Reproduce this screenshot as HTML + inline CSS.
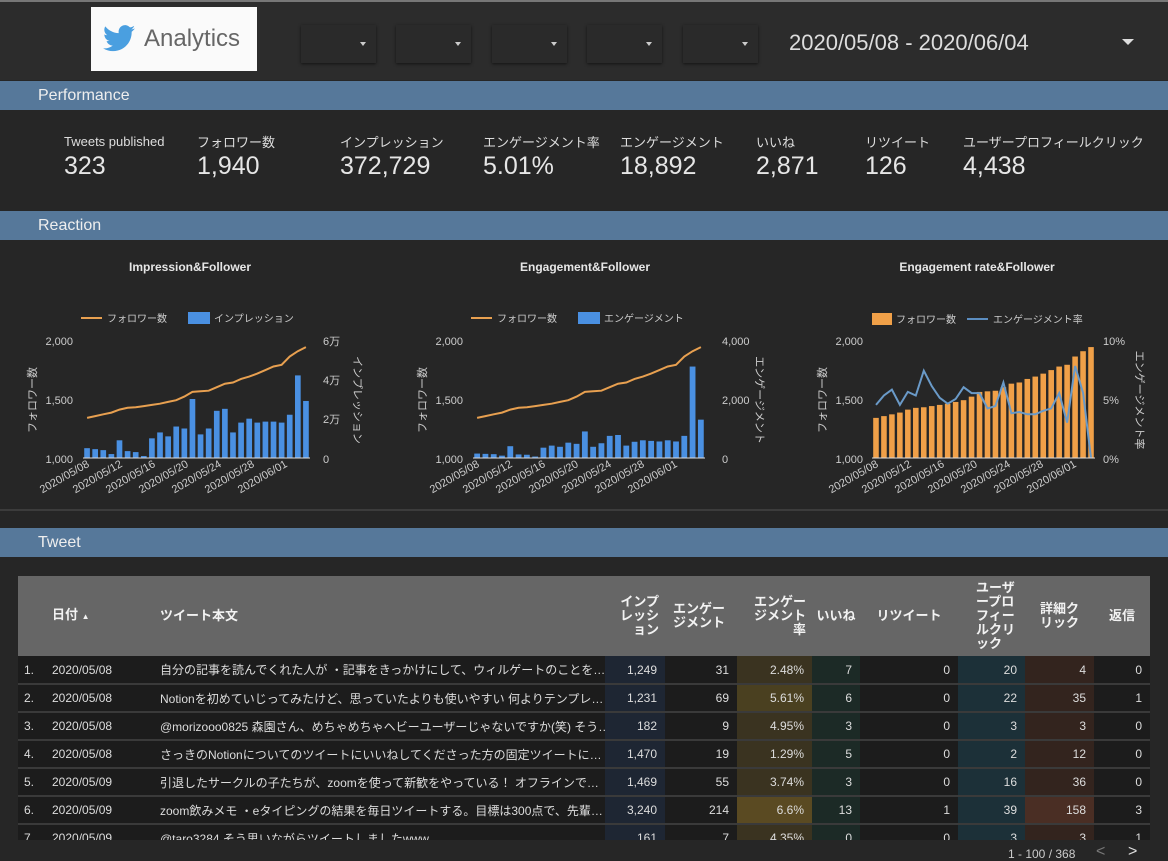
<!DOCTYPE html>
<html><head><meta charset="utf-8">
<style>
*{margin:0;padding:0;box-sizing:border-box}
body{width:1168px;height:861px;overflow:hidden;background:#262626;font-family:"Liberation Sans","Noto Sans CJK JP",sans-serif;color:#ddd;position:relative}
.abs{position:absolute}
.top{left:0;top:0;width:1168px;height:80px;background:#2c2c2c;border-top:2px solid #777}
.logo{left:91px;top:7px;width:166px;height:64px;background:#fafafa}
.dd{top:25px;width:75px;height:38px;background:#2a2a2a;box-shadow:0 1px 3px rgba(0,0,0,.6)}
.dd:after{content:"";position:absolute;right:10px;top:17px;border:3px solid transparent;border-top:4px solid #ccc}
.bar{left:0;width:1168px;height:29px;background:#56789a;color:#eee;font-size:16px;padding:6px 0 0 38px}
.lab{font-size:13px;color:#ddd;top:132px}
.val{font-size:25px;color:#e6e6e6;top:152px}
table{border-collapse:collapse;table-layout:fixed;font-size:12px;width:1132px}
th{background:#666;color:#f2f2f2;font-weight:bold;font-size:13px;height:80px;line-height:14px;vertical-align:middle;padding:0}
td{height:28px;border-bottom:2px solid #3a3a3a;color:#ddd;text-align:right;padding:0 8px 0 0;white-space:nowrap;overflow:hidden;text-overflow:clip}
td.l{text-align:left;padding-left:6px}
</style></head><body>
<div class="abs top"></div>
<div class="abs logo">
<svg class="abs" style="left:12px;top:18px" width="32" height="27" viewBox="0 0 24 20"><path fill="#4a9fe0" d="M24 2.4c-.9.4-1.8.6-2.8.8 1-.6 1.8-1.6 2.2-2.7-1 .6-2 1-3.1 1.2C19.3.7 18 0 16.6 0c-2.7 0-4.9 2.2-4.9 4.9 0 .4 0 .8.1 1.1C7.7 5.8 4.1 3.9 1.7.9c-.4.7-.7 1.6-.7 2.5 0 1.7.9 3.2 2.2 4.1-.8 0-1.6-.2-2.2-.6v.1c0 2.4 1.7 4.4 3.9 4.8-.4.1-.8.2-1.3.2-.3 0-.6 0-.9-.1.6 2 2.4 3.4 4.6 3.4-1.700 1.3-3.8 2.1-6.1 2.1-.4 0-.8 0-1.2-.1 2.2 1.4 4.8 2.2 7.5 2.2 9.1 0 14-7.5 14-14v-.6c1-.7 1.8-1.6 2.5-2.5z"/></svg>
<div class="abs" style="left:53px;top:18px;font-size:24px;color:#666">Analytics</div></div>
<div class="abs dd" style="left:301px"></div><div class="abs dd" style="left:396px"></div><div class="abs dd" style="left:492px"></div><div class="abs dd" style="left:587px"></div><div class="abs dd" style="left:683px"></div>
<div class="abs" style="left:789px;top:30px;font-size:22px;color:#ddd">2020/05/08 - 2020/06/04</div>
<div class="abs" style="left:1122px;top:39px;border:6px solid transparent;border-top:6px solid #ddd"></div>

<div class="abs bar" style="top:81px">Performance</div>
<div class="abs lab" style="left:64px;top:134px">Tweets published</div><div class="abs val" style="left:64px">323</div>
<div class="abs lab" style="left:197px">フォロワー数</div><div class="abs val" style="left:197px">1,940</div>
<div class="abs lab" style="left:340px">インプレッション</div><div class="abs val" style="left:340px">372,729</div>
<div class="abs lab" style="left:483px">エンゲージメント率</div><div class="abs val" style="left:483px">5.01%</div>
<div class="abs lab" style="left:620px">エンゲージメント</div><div class="abs val" style="left:620px">18,892</div>
<div class="abs lab" style="left:756px">いいね</div><div class="abs val" style="left:756px">2,871</div>
<div class="abs lab" style="left:865px">リツイート</div><div class="abs val" style="left:865px">126</div>
<div class="abs lab" style="left:963px">ユーザープロフィールクリック</div><div class="abs val" style="left:963px">4,438</div>

<div class="abs bar" style="top:211px">Reaction</div>
<svg class="abs" id="ch" style="left:0;top:240px" width="1168" height="270" font-family="Liberation Sans,Noto Sans CJK JP,sans-serif">
<g font-size="12" font-weight="bold" fill="#e6e6e6" text-anchor="middle">
<text x="190" y="31">Impression&amp;Follower</text><text x="585" y="31">Engagement&amp;Follower</text><text x="977" y="31">Engagement rate&amp;Follower</text></g>
<g font-size="10" fill="#ccc">
<line x1="81" y1="78" x2="102" y2="78" stroke="#e8a050" stroke-width="2"/><text x="107" y="82">フォロワー数</text>
<rect x="188" y="72" width="22" height="12" fill="#4a90e2"/><text x="214" y="82">インプレッション</text>
<line x1="471" y1="78" x2="492" y2="78" stroke="#e8a050" stroke-width="2"/><text x="497" y="82">フォロワー数</text>
<rect x="578" y="72" width="22" height="12" fill="#4a90e2"/><text x="604" y="82">エンゲージメント</text>
<rect x="872" y="73" width="20" height="12" fill="#f0a048"/><text x="896" y="83">フォロワー数</text>
<line x1="967" y1="79" x2="988" y2="79" stroke="#5b8dc0" stroke-width="2"/><text x="993" y="83">エンゲージメント率</text>
</g>
<g font-size="11" fill="#ccc" text-anchor="end">
<text x="73" y="105">2,000</text><text x="73" y="164">1,500</text><text x="73" y="223">1,000</text>
<text x="463" y="105">2,000</text><text x="463" y="164">1,500</text><text x="463" y="223">1,000</text>
<text x="863" y="105">2,000</text><text x="863" y="164">1,500</text><text x="863" y="223">1,000</text></g>
<g font-size="11" fill="#ccc">
<text x="323" y="105">6万</text><text x="323" y="144">4万</text><text x="323" y="183">2万</text><text x="323" y="223">0</text>
<text x="722" y="105">4,000</text><text x="722" y="164">2,000</text><text x="722" y="223">0</text>
<text x="1103" y="105">10%</text><text x="1103" y="164">5%</text><text x="1103" y="223">0%</text></g>
<g font-size="11" fill="#ccc" text-anchor="middle">
<text transform="translate(36,160) rotate(-90)">フォロワー数</text><text transform="translate(354,160) rotate(90)">インプレッション</text>
<text transform="translate(426,160) rotate(-90)">フォロワー数</text><text transform="translate(756,160) rotate(90)">エンゲージメント</text>
<text transform="translate(826,160) rotate(-90)">フォロワー数</text><text transform="translate(1136,160) rotate(90)">エンゲージメント率</text></g>
<g id="dl" font-size="11" fill="#ccc" text-anchor="end">
<text transform="translate(90,226) rotate(-30)">2020/05/08</text><text transform="translate(123,226) rotate(-30)">2020/05/12</text><text transform="translate(156,226) rotate(-30)">2020/05/16</text><text transform="translate(189,226) rotate(-30)">2020/05/20</text><text transform="translate(222,226) rotate(-30)">2020/05/24</text><text transform="translate(255,226) rotate(-30)">2020/05/28</text><text transform="translate(288,226) rotate(-30)">2020/06/01</text>
<text transform="translate(480,226) rotate(-30)">2020/05/08</text><text transform="translate(513,226) rotate(-30)">2020/05/12</text><text transform="translate(546,226) rotate(-30)">2020/05/16</text><text transform="translate(579,226) rotate(-30)">2020/05/20</text><text transform="translate(612,226) rotate(-30)">2020/05/24</text><text transform="translate(645,226) rotate(-30)">2020/05/28</text><text transform="translate(678,226) rotate(-30)">2020/06/01</text>
<text transform="translate(879,226) rotate(-30)">2020/05/08</text><text transform="translate(912,226) rotate(-30)">2020/05/12</text><text transform="translate(945,226) rotate(-30)">2020/05/16</text><text transform="translate(978,226) rotate(-30)">2020/05/20</text><text transform="translate(1011,226) rotate(-30)">2020/05/24</text><text transform="translate(1044,226) rotate(-30)">2020/05/28</text><text transform="translate(1077,226) rotate(-30)">2020/06/01</text></g>
</svg>
<div class="abs" style="left:0;top:509px;width:1168px;height:2px;background:#3c3c3c"></div>
<div class="abs bar" style="top:528px">Tweet</div>
<div class="abs" style="left:18px;top:576px;width:1132px;height:264px;overflow:hidden;background:#1c1c1c">
<table>
<colgroup><col style="width:28px"><col style="width:108px"><col style="width:451px"><col style="width:60px"><col style="width:72px"><col style="width:75px"><col style="width:48px"><col style="width:98px"><col style="width:67px"><col style="width:69px"><col style="width:56px"></colgroup>
<tr><th></th><th style="text-align:left;padding-left:6px">日付 <span style="font-size:8px">▲</span></th><th style="text-align:left;padding-left:6px">ツイート本文</th><th style="text-align:right;padding-right:6px">インプ<br>レッシ<br>ョン</th><th style="text-align:left;padding-left:8px">エンゲー<br>ジメント</th><th style="text-align:right;padding-right:6px">エンゲー<br>ジメント<br>率</th><th>いいね</th><th>リツイート</th><th style="text-align:left;padding-left:18px">ユーザ<br>ープロ<br>フィー<br>ルクリ<br>ック</th><th>詳細ク<br>リック</th><th>返信</th></tr>
<tbody id="tb"></tbody>
</table></div>
<div class="abs" style="left:1008px;top:847px;font-size:12px;color:#ccc">1 - 100 / 368</div>
<div class="abs" style="left:1096px;top:843px;font-size:16px;color:#777">&lt;</div>
<div class="abs" style="left:1128px;top:843px;font-size:16px;color:#ddd">&gt;</div>
<script>
var rows=[["1.","2020/05/08","自分の記事を読んでくれた人が ・記事をきっかけにして、ウィルゲートのことを…","1,249","31","2.48%","7","0","20","4","0"],
["2.","2020/05/08","Notionを初めていじってみたけど、思っていたよりも使いやすい 何よりテンプレ…","1,231","69","5.61%","6","0","22","35","1"],
["3.","2020/05/08","@morizooo0825 森園さん、めちゃめちゃヘビーユーザーじゃないですか(笑) そう…","182","9","4.95%","3","0","3","3","0"],
["4.","2020/05/08","さっきのNotionについてのツイートにいいねしてくださった方の固定ツイートに…","1,470","19","1.29%","5","0","2","12","0"],
["5.","2020/05/09","引退したサークルの子たちが、zoomを使って新歓をやっている！ オフラインで…","1,469","55","3.74%","3","0","16","36","0"],
["6.","2020/05/09","zoom飲みメモ ・eタイピングの結果を毎日ツイートする。目標は300点で、先輩…","3,240","214","6.6%","13","1","39","158","3"],
["7","2020/05/09","@taro3284 そう思いながらツイートしましたwww","161","7","4.35%","0","0","3","3","1"]];
var bg=[null,null,null,"#1e2633",null,"#3a3320","#1c2a26",null,"#1c3038","#33241e",null];
var h="";rows.forEach(function(r,i){h+="<tr>";r.forEach(function(c,j){var s=bg[j]?' style="background:'+bg[j]+'"':'';if(i==5&&j==5)s=' style="background:#5a4a22"';if(i==5&&j==9)s=' style="background:#4a2e24"';if(i==1&&j==5)s=' style="background:#4a4020"';h+="<td"+(j<3?' class="l"':'')+s+">"+c+"</td>"});h+="</tr>"});
document.getElementById("tb").innerHTML=h;
var NS="http://www.w3.org/2000/svg",svg=document.getElementById("ch");
function el(t,a){var e=document.createElementNS(NS,t);for(var k in a)e.setAttribute(k,a[k]);svg.appendChild(e);return e}
var fol=[1340,1355,1370,1385,1410,1425,1430,1440,1450,1460,1475,1490,1520,1560,1565,1570,1600,1630,1640,1670,1690,1715,1745,1775,1790,1860,1905,1940];
var imp=[.5,.45,.4,.2,.9,.35,.3,.1,1,1.3,1.1,1.6,1.5,3,1.2,1.5,2.4,2.5,1.3,1.8,2,1.8,1.85,1.85,1.8,2.2,4.2,2.9];
var eng=[150,140,130,80,400,120,110,50,350,420,380,520,480,900,380,500,750,780,420,550,600,580,560,600,560,750,3100,1300];
var rate=[4.5,5.3,5.8,4.5,5.6,5.3,7.4,6.1,5.1,4.6,5,6,5.5,5.5,4.2,4.4,6.4,3.8,3.9,3.7,3.7,4,4.2,5.5,3,7.8,5.5,0];
function chart(x0,x1,bars,bmax,bcol,lcol,swap){var n=28,w=(x1-x0)/n,yb=218,H=118;
for(var i=0;i<n;i++){var v=swap?(fol[i]-1000)/1000:bars[i]/bmax;el("rect",{x:x0+i*w+w*0.15,y:yb-v*H,width:w*0.7,height:v*H,fill:bcol})}
var p=[];for(i=0;i<n;i++){var v=swap?rate[i]/10:(fol[i]-1000)/1000;p.push((x0+i*w+w/2).toFixed(1)+","+(yb-v*H).toFixed(1))}
el("polyline",{points:p.join(" "),fill:"none",stroke:lcol,"stroke-width":2});
el("line",{x1:x0,y1:yb,x2:x1,y2:yb,stroke:"#ddd","stroke-width":1})}
chart(83,310,imp,6,"#4a90e2","#e8a050",false);
chart(473,705,eng,4000,"#4a90e2","#e8a050",false);
chart(872,1095,null,0,"#f0a048","#6a9ac8",true);
</script>
</body></html>
